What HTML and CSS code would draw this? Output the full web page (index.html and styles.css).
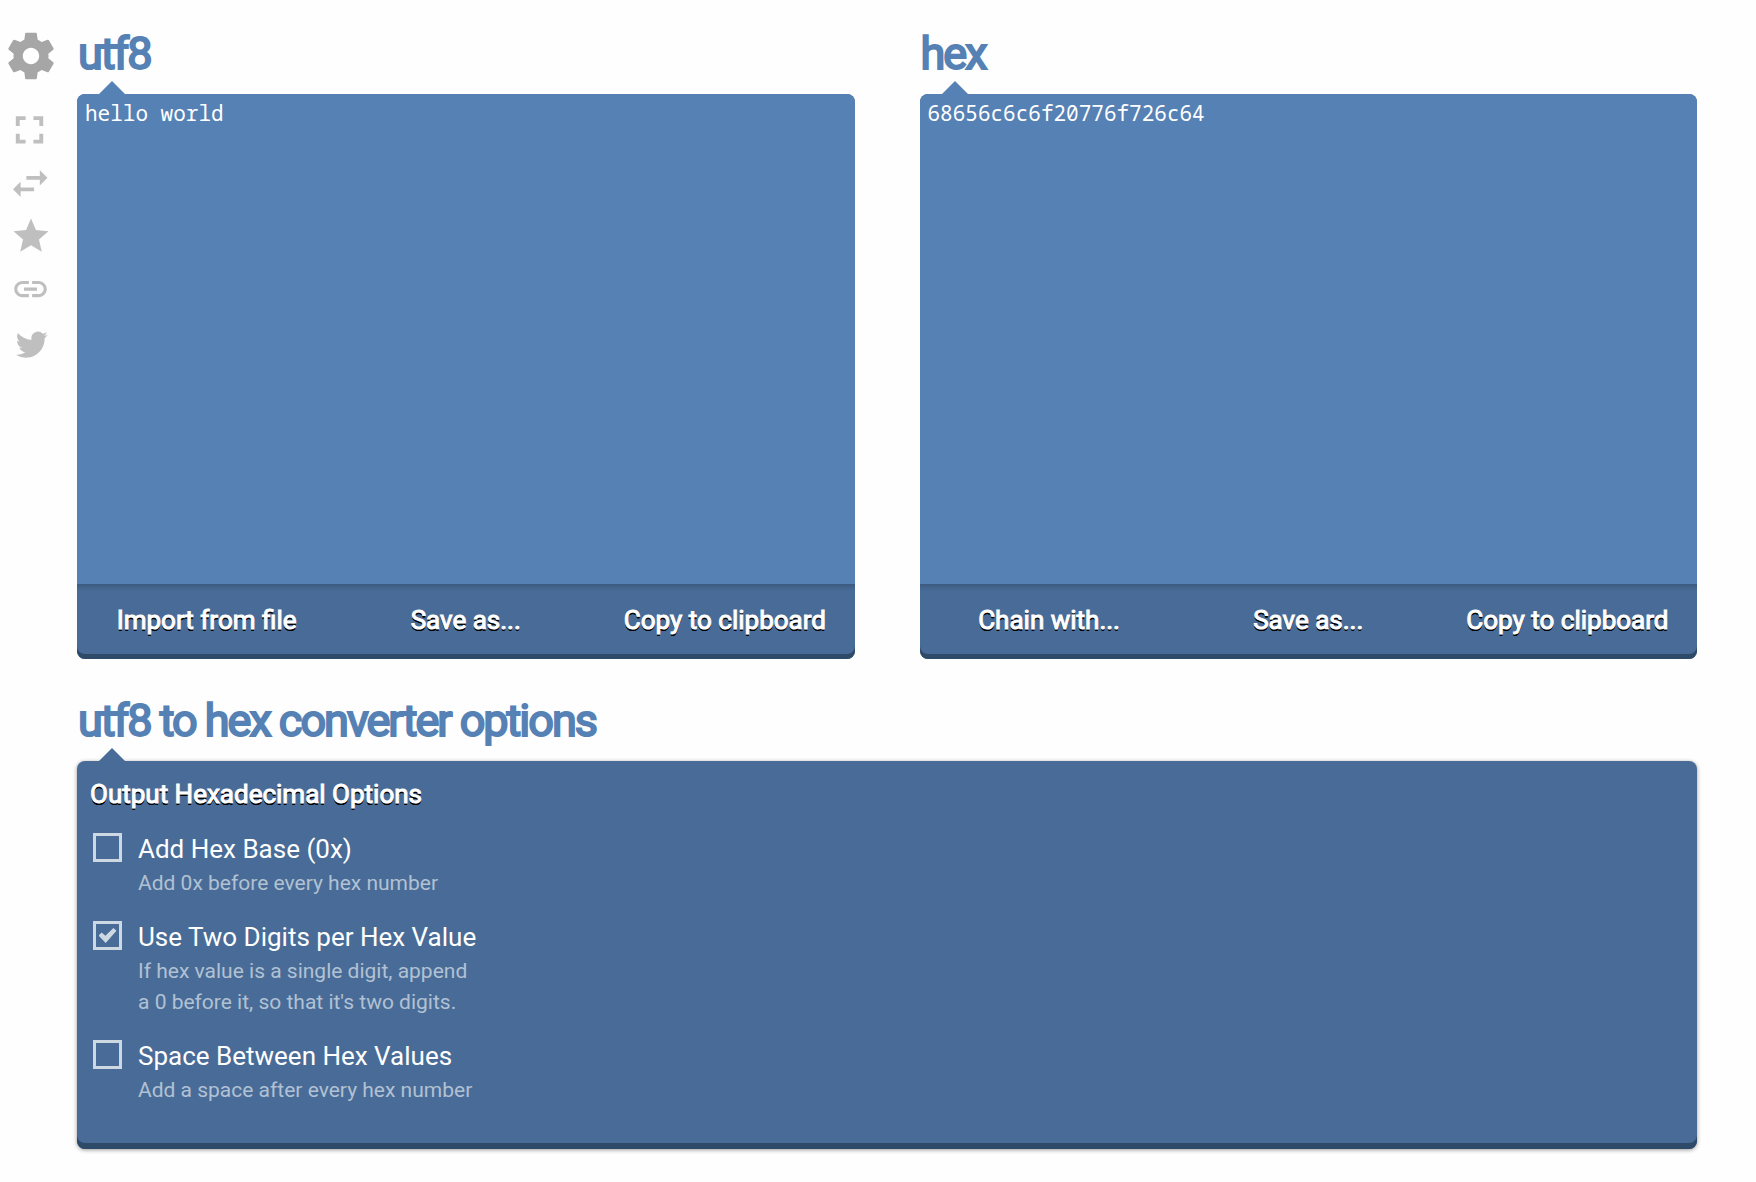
FILE: index.html
```html
<!DOCTYPE html>
<html lang="en">
<head>
<meta charset="utf-8">
<meta name="viewport" content="width=device-width, initial-scale=1">
<title>utf8 to hex converter</title>
<link rel="stylesheet" href="styles.css">
</head>
<body>
<nav class="rail" aria-label="Tools">
  <button class="rail-btn rail-btn-main" type="button" aria-label="Settings"><svg width="56" height="56" viewBox="0 0 24 24"><path d="M19.43 12.98c.04-.32.07-.64.07-.98s-.03-.66-.07-.98l2.11-1.65c.19-.15.24-.42.12-.64l-2-3.46c-.12-.22-.39-.3-.61-.22l-2.49 1c-.52-.4-1.08-.73-1.69-.98l-.38-2.65C14.46 2.18 14.25 2 14 2h-4c-.25 0-.46.18-.49.42l-.38 2.65c-.61.25-1.17.59-1.69.98l-2.49-1c-.23-.09-.49 0-.61.22l-2 3.46c-.13.22-.07.49.12.64l2.11 1.65c-.04.32-.07.65-.07.98s.03.66.07.98l-2.11 1.65c-.19.15-.24.42-.12.64l2 3.46c.12.22.39.3.61.22l2.49-1c.52.4 1.08.73 1.69.98l.38 2.65c.03.24.24.42.49.42h4c.25 0 .46-.18.49-.42l.38-2.65c.61-.25 1.17-.59 1.69-.98l2.49 1c.23.09.49 0 .61-.22l2-3.46c.12-.22.07-.49-.12-.64l-2.11-1.65zM12 15.5c-1.93 0-3.5-1.57-3.5-3.5s1.57-3.5 3.5-3.5 3.5 1.57 3.5 3.5-1.57 3.5-3.5 3.5z"/></svg></button>
  <button class="rail-btn" type="button" aria-label="Full screen"><svg width="47" height="47" viewBox="0.5 0.3 24 24"><path d="M7 14H5v5h5v-2H7v-3zm-2-4h2V7h3V5H5v5zm12 7h-3v2h5v-5h-2v3zM14 5v2h3v3h2V5h-5z"/></svg></button>
  <button class="rail-btn" type="button" aria-label="Swap"><svg width="46" height="46" viewBox="0.4 -0.3 24 24"><path d="M6.99 11L3 15l3.99 4v-3H14v-2H6.99v-3zM21 9l-3.99-4v3H10v2h7.01v3L21 9z"/></svg></button>
  <button class="rail-btn" type="button" aria-label="Favorite"><svg width="42" height="42" viewBox="0 0 24 24"><path d="M12 17.27L18.18 21l-1.64-7.03L22 9.24l-7.19-.61L12 2 9.19 8.63 2 9.24l5.46 4.73L5.82 21z"/></svg></button>
  <button class="rail-btn" type="button" aria-label="Link"><svg width="39" height="39" viewBox="0 0.3 24 24"><path d="M3.9 12c0-1.71 1.39-3.1 3.1-3.1h4V7H7c-2.76 0-5 2.24-5 5s2.24 5 5 5h4v-1.9H7c-1.71 0-3.1-1.39-3.1-3.1zM8 13h8v-2H8v2zm9-6h-4v1.9h4c1.71 0 3.1 1.39 3.1 3.1s-1.39 3.1-3.1 3.1h-4V17h4c2.76 0 5-2.24 5-5s-2.24-5-5-5z"/></svg></button>
  <a class="rail-btn" href="#" aria-label="Twitter"><svg width="35" height="36" viewBox="-2 -3.5 26 27"><path d="M23.953 4.57a10 10 0 01-2.825.775 4.958 4.958 0 002.163-2.723c-.951.555-2.005.959-3.127 1.184a4.92 4.92 0 00-8.384 4.482C7.69 8.095 4.067 6.13 1.64 3.162a4.822 4.822 0 00-.666 2.475c0 1.71.87 3.213 2.188 4.096a4.904 4.904 0 01-2.228-.616v.06a4.923 4.923 0 003.946 4.827 4.996 4.996 0 01-2.212.085 4.936 4.936 0 004.604 3.417 9.867 9.867 0 01-6.102 2.105c-.39 0-.779-.023-1.17-.067a13.995 13.995 0 007.557 2.209c9.053 0 13.998-7.496 13.998-13.985 0-.21 0-.42-.015-.63A9.935 9.935 0 0024 4.59z"/></svg></a>
</nav>
<main class="page">
  <div class="converters">
    <section class="block">
      <h1 class="title"><label for="source">utf8</label></h1>
      <div class="panel">
        <textarea class="editor" id="source" spellcheck="false">hello world</textarea>
        <div class="actions">
          <button class="action" type="button">Import from file</button>
          <button class="action" type="button">Save as...</button>
          <button class="action" type="button">Copy to clipboard</button>
        </div>
      </div>
    </section>
    <section class="block">
      <h1 class="title"><label for="result">hex</label></h1>
      <div class="panel">
        <textarea class="editor" id="result" spellcheck="false">68656c6c6f20776f726c64</textarea>
        <div class="actions">
          <button class="action" type="button">Chain with...</button>
          <button class="action" type="button">Save as...</button>
          <button class="action" type="button">Copy to clipboard</button>
        </div>
      </div>
    </section>
  </div>
  <section class="block">
    <h1 class="title">utf8 to hex converter options</h1>
    <div class="panel panel-options">
      <h2 class="group-title">Output Hexadecimal Options</h2>
      <div class="option">
        <input class="box" type="checkbox" id="base" aria-describedby="base-note">
        <div>
          <label class="option-name" for="base">Add Hex Base (0x)</label>
          <p class="note" id="base-note">Add 0x before every hex number</p>
        </div>
      </div>
      <div class="option">
        <input class="box" type="checkbox" id="digits" aria-describedby="digits-note" checked>
        <div>
          <label class="option-name" for="digits">Use Two Digits per Hex Value</label>
          <p class="note" id="digits-note">If hex value is a single digit, append<br>a 0 before it, so that it's two digits.</p>
        </div>
      </div>
      <div class="option">
        <input class="box" type="checkbox" id="space" aria-describedby="space-note">
        <div>
          <label class="option-name" for="space">Space Between Hex Values</label>
          <p class="note" id="space-note">Add a space after every hex number</p>
        </div>
      </div>
    </div>
  </section>
</main>
</body>
</html>
```
FILE: styles.css
```css
* { box-sizing: border-box; }
body {
  margin: 0;
  display: flex;
  background: #fefefe;
  font-family: Roboto, "Liberation Sans", sans-serif;
  color: #fff;
}
h1, h2, p { margin: 0; }
button { border: 0; padding: 0; background: none; font: inherit; color: inherit; }

.rail {
  display: flex;
  flex-direction: column;
  align-items: center;
  gap: 1px;
  flex: none;
  width: 61px;
  padding-top: 28px;
}
.rail-btn {
  display: flex;
  align-items: center;
  justify-content: center;
  height: 52px;
  color: #bfbfbf;
}
.rail-btn-main { height: 56px; margin-bottom: 19px; color: #a6a6a6; }
.rail svg { display: block; fill: currentColor; }

.page {
  flex: 1;
  min-width: 0;
  display: flex;
  flex-direction: column;
  gap: 35px;
  padding: 27px 59px 32px 16px;
}
.converters { display: grid; grid-template-columns: 1fr 1fr; gap: 65px; }
.title {
  margin-bottom: 13px;
  padding-left: 1px;
  color: #5681b4;
  font-size: 45px;
  line-height: 54px;
  font-weight: 400;
  letter-spacing: -2px;
  -webkit-text-stroke: 2px;
}
.panel {
  --tip: #5681b4;
  position: relative;
  border-radius: 8px;
  background: #486c97;
  box-shadow: inset 0 -5px #2f4a69;
}
.panel::before {
  content: "";
  position: absolute;
  left: 22px;
  bottom: 100%;
  border: 13px solid transparent;
  border-top: 0;
  border-bottom-color: var(--tip);
}
.editor {
  display: block;
  width: 100%;
  height: 490px;
  padding: 6px 8px;
  border: 0;
  border-radius: 8px 8px 0 0;
  outline: 0;
  resize: none;
  background: #5681b4;
  color: #fff;
  font: 21px/26px "Droid Sans Mono", "Noto Sans Mono", "Noto Mono", "DejaVu Sans Mono", monospace;
}
.actions {
  display: grid;
  grid-template-columns: repeat(3, 1fr);
  height: 75px;
  padding-bottom: 3px;
  border-radius: 0 0 8px 8px;
  background: linear-gradient(#3c5a7e, transparent 7px);
}
.action {
  font-size: 26px;
  font-weight: 400;
  -webkit-text-stroke: 1px;
  text-shadow: 0 2px #000, 0 2px #000;
}

.panel-options {
  --tip: #486c97;
  padding: 16px 13px 43px;
  box-shadow: inset 0 -6px #2f4a69, 0 1px 4px rgba(0, 0, 0, .4);
}
.group-title {
  margin-bottom: 22px;
  font-size: 26px;
  line-height: 34px;
  font-weight: 400;
  -webkit-text-stroke: 1px;
  text-shadow: 0 2px #000, 0 2px #000;
}
.option { display: flex; gap: 16px; padding-left: 3px; }
.option + .option { margin-top: 22px; }
.box {
  appearance: none;
  display: grid;
  place-items: center;
  flex: none;
  width: 29px;
  height: 29px;
  margin: 0;
  border: 3px solid #ced8e3;
}
.box:checked::before {
  content: "";
  width: 18px;
  height: 15px;
  background: #ced8e3;
  clip-path: polygon(0 50%, 18% 30%, 38% 52%, 83% 0, 100% 18%, 40% 100%);
}
.option-name { display: block; font-size: 26px; line-height: 32px; }
.note { margin-top: 3px; font-size: 21px; line-height: 31px; color: #b2c1d3; }
```
